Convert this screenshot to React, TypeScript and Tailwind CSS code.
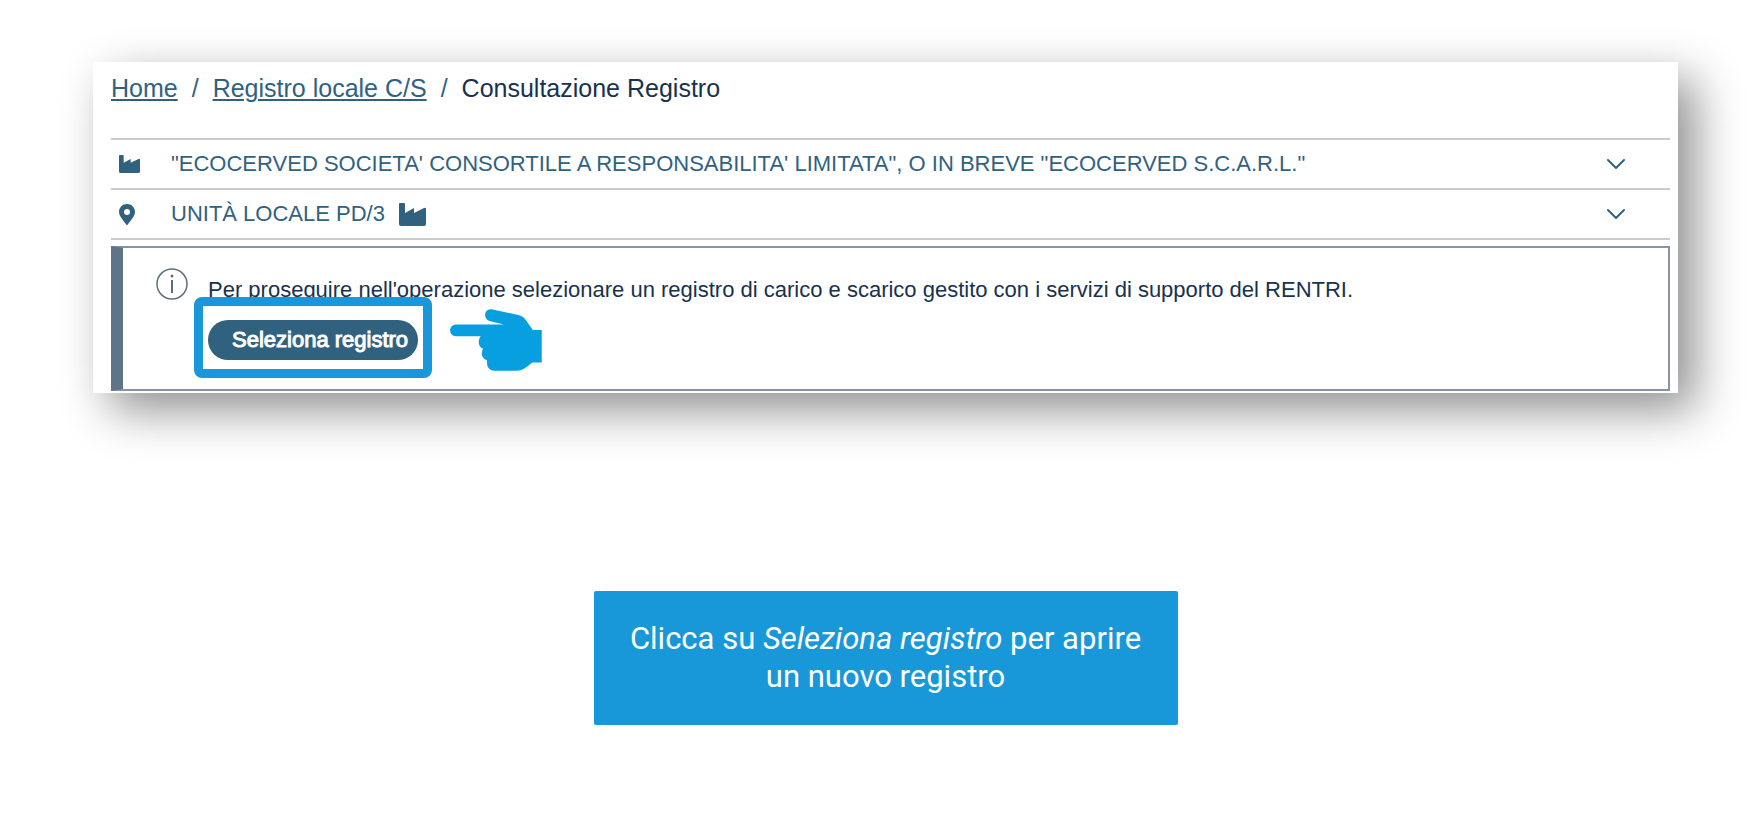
import React from 'react';
import { ChevronDown } from 'lucide-react';

function FactoryIcon({ className }: { className: string }) {
  return (
    <svg viewBox="0 0 27 23" preserveAspectRatio="none" className={className} fill="currentColor" aria-hidden="true">
      <path d="M1 0H5Q6 0 6 1V10L15 5V10L25 5Q27 4 27 6V21Q27 23 25 23H2Q0 23 0 21V1Q0 0 1 0Z" />
    </svg>
  );
}

function PinIcon() {
  return (
    <svg viewBox="0 0 16 21" className="w-4 h-[21px]" fill="currentColor" fillRule="evenodd" aria-hidden="true">
      <path d="M8 0C12.500 0 16 3.500 16 7.800C16 12 12 16 8.800 20.600Q8 21.500 7.200 20.600C4 16 0 12 0 7.800C0 3.500 3.500 0 8 0ZM8 5A3 3 0 1 0 8 11A3 3 0 1 0 8 5Z" />
    </svg>
  );
}

function InfoIcon() {
  return (
    <svg viewBox="0 0 32 32" className="w-8 h-8 shrink-0 text-[#5f6f80]" fill="none" stroke="currentColor" aria-hidden="true">
      <circle cx="16" cy="16" r="15" strokeWidth="1.5" />
      <path d="M16 12V25" strokeWidth="2" />
      <circle cx="16" cy="8" r="1.500" fill="currentColor" stroke="none" />
    </svg>
  );
}

function PointingHand() {
  return (
    <svg viewBox="60 57 276 187" className="w-[92px] h-[62px] shrink-0" fill="#089fe0" aria-hidden="true">
      <path d="M77 104H222L178 93C158 87 162 56 184 58L262 74Q279 77 288 90L309 120H336V218H308L290 232Q277 243 260 243H190Q168 241 171 211C156 208 151 190 159 177C144 171 142 151 152 139H77C54 137 54 106 77 104Z" />
    </svg>
  );
}

interface RowProps {
  icon: React.ReactNode;
  children: React.ReactNode;
}

function AccordionRow({ icon, children }: RowProps) {
  return (
    <button
      type="button"
      aria-expanded="false"
      className="w-full flex items-center h-[50px] border-b-2 border-[#cbcbcb] text-left text-[22px] leading-6 text-[#30627f] cursor-pointer"
    >
      <span className="w-[60px] pl-2 shrink-0">{icon}</span>
      <span className="flex-1 flex items-center gap-[14px]">{children}</span>
      <ChevronDown size={32} strokeWidth={1.5} className="mr-[38px] shrink-0" />
    </button>
  );
}

export default function App() {
  return (
    <main className="bg-white pt-[62px] pl-[93px] pr-[86px] pb-[95px] font-['Liberation_Sans',Arial,sans-serif]">
      <section className="bg-white pt-[12px] pl-[18px] pr-2 pb-[2px] shadow-[17px_17px_44px_rgba(0,0,0,0.44)]">
        <nav aria-label="Breadcrumb">
          <ol className="flex items-center gap-3.5 text-[25px] leading-7 text-[#30627f]">
            <li><a href="#home" className="underline decoration-2 underline-offset-2">Home</a></li>
            <li aria-hidden="true">/</li>
            <li><a href="#registro" className="underline decoration-2 underline-offset-2">Registro locale C/S</a></li>
            <li aria-hidden="true">/</li>
            <li aria-current="page" className="text-[#17324d]">Consultazione Registro</li>
          </ol>
        </nav>

        <div className="mt-9 border-t-2 border-[#cbcbcb]">
          <AccordionRow icon={<FactoryIcon className="w-[21px] h-[18px]" />}>
            "ECOCERVED SOCIETA' CONSORTILE A RESPONSABILITA' LIMITATA", O IN BREVE "ECOCERVED S.C.A.R.L."
          </AccordionRow>
          <AccordionRow icon={<PinIcon />}>
            UNITÀ LOCALE PD/3
            <FactoryIcon className="w-[27px] h-[23px]" />
          </AccordionRow>
        </div>

        <div className="mt-1.5 flex gap-5 border-2 border-l-[12px] border-[#8593a5] border-l-[#5d7489] pl-[33px] pt-5 pb-[18px]">
          <InfoIcon />
          <div className="pt-[10px] flex-1">
            <p className="text-[22px] leading-6 text-[#17324d]">
              Per proseguire nell'operazione selezionare un registro di carico e scarico gestito con i servizi di supporto del RENTRI.
            </p>
            <div className="mt-[7px] flex items-center gap-8">
              <div className="relative">
                <button type="button" className="block h-10 pl-6 pr-2.5 rounded-full bg-[#30627f] text-white text-[22px] leading-6 [-webkit-text-stroke:1px_#fff] cursor-pointer">
                  Seleziona registro
                </button>
                <div className="absolute -inset-x-[14px] -top-[23px] -bottom-[18px] border-[9px] border-[#1a97d9] rounded-lg pointer-events-none" />
              </div>
              <PointingHand />
            </div>
          </div>
        </div>
      </section>

      <aside className="mt-[198px] mx-auto w-[584px] max-w-full px-7 py-[29px] rounded-xs bg-[#1998d9] text-white text-center text-[31px] leading-[38px] font-[Roboto,sans-serif]">
        <p>Clicca su <em>Seleziona registro</em> per aprire un nuovo registro</p>
      </aside>
    </main>
  );
}
